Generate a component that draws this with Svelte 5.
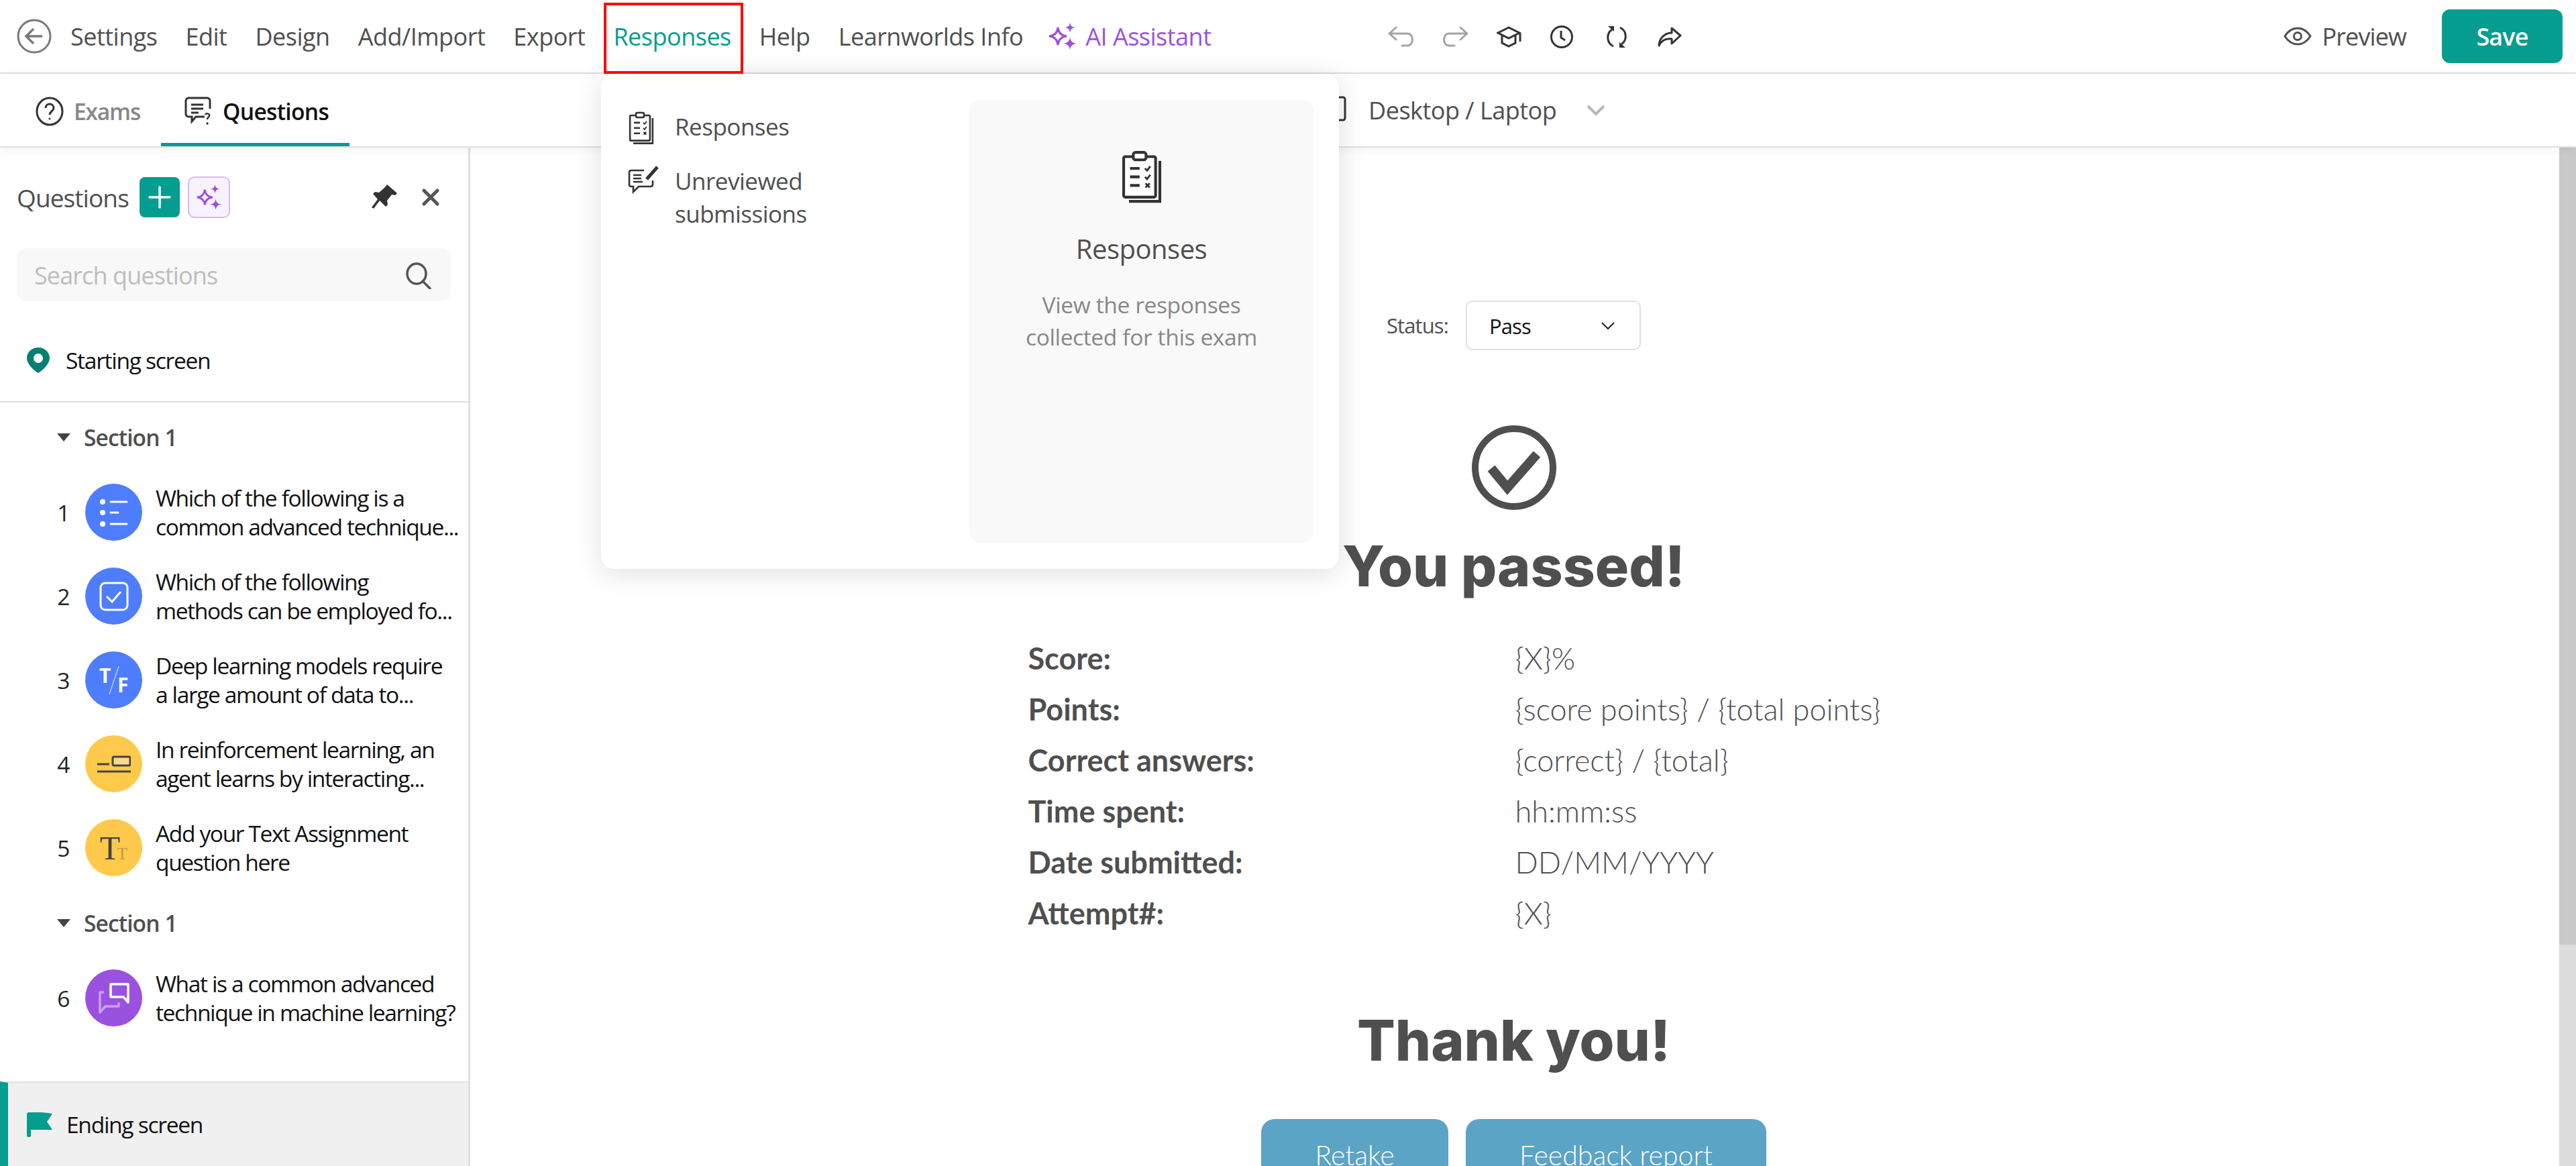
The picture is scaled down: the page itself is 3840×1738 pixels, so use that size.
<script>
    const navItems = ['Settings', 'Edit', 'Design', 'Add/Import', 'Export', 'Responses', 'Help', 'Learnworlds Info'];

    function star(cx, cy, r) {
        const k = r * 0.22;
        return `M${cx} ${cy - r}Q${cx + k * 0.4} ${cy - k * 0.4} ${cx + r} ${cy}Q${cx + k * 0.4} ${cy + k * 0.4} ${cx} ${cy + r}Q${cx - k * 0.4} ${cy + k * 0.4} ${cx - r} ${cy}Q${cx - k * 0.4} ${cy - k * 0.4} ${cx} ${cy - r}Z`;
    }

    const sections = [
        {
            title: 'Section 1',
            questions: [
                { n: 1, kind: 'list', color: '#4f7dff', lines: ['Which of the following is a', 'common advanced technique...'] },
                { n: 2, kind: 'check', color: '#4f7dff', lines: ['Which of the following', 'methods can be employed fo...'] },
                { n: 3, kind: 'tf', color: '#4f7dff', lines: ['Deep learning models require', 'a large amount of data to...'] },
                { n: 4, kind: 'gap', color: '#ffca4b', lines: ['In reinforcement learning, an', 'agent learns by interacting...'] },
                { n: 5, kind: 'text', color: '#ffca4b', lines: ['Add your Text Assignment', 'question here'] },
            ],
        },
        {
            title: 'Section 1',
            questions: [
                { n: 6, kind: 'chat', color: '#9b51e0', lines: ['What is a common advanced', 'technique in machine learning?'] },
            ],
        },
    ];

    const results = [
        ['Score:', '{X}%'],
        ['Points:', '{score points} / {total points}'],
        ['Correct answers:', '{correct} / {total}'],
        ['Time spent:', 'hh:mm:ss'],
        ['Date submitted:', 'DD/MM/YYYY'],
        ['Attempt#:', '{X}'],
    ];
</script>

{#snippet clipboard(size)}
    <svg class="clip" width={size} height={size * 1.24} viewBox="0 0 40 50" fill="none" stroke="#333" stroke-width="2.6">
        <path d="M37 10v38H8" stroke-width="2.6" />
        <rect x="3" y="6" width="30" height="38" rx="1.5" fill="#fff" />
        <rect x="12" y="2" width="12" height="7" rx="2" fill="#fff" />
        <path d="M9 17h9M9 25h9M9 33h9" />
        <path d="M23 17l2 2 3-4M23 25l2 2 3-4M23.500 31l4 4M27.500 31l-4 4" stroke-width="1.800" />
    </svg>
{/snippet}

<div class="app">
    <header class="topbar">
        <svg class="back" width="52" height="52" viewBox="0 0 52 52" fill="none" stroke="#7a7a7a" stroke-width="3">
            <circle cx="26" cy="26" r="24" />
            <path d="M38 26H15M25 15L14 26l11 11" stroke-width="3.500" />
        </svg>
        <nav class="nav">
            {#each navItems as item}
                <span class="nav-item" class:active={item === 'Responses'}>{item}</span>
            {/each}
            <span class="nav-item ai">
                <svg width="42" height="42" viewBox="0 0 42 42" fill="#9b51e0">
                    <path d={star(14, 21, 13)} fill="none" stroke="#9b51e0" stroke-width="3" />
                    <path d={star(32, 8, 7.500)} />
                    <path d={star(32, 32, 9.500)} />
                </svg>
                AI Assistant
            </span>
        </nav>

        <div class="tools">
            <svg width="40" height="32" viewBox="0 0 40 32" fill="none" stroke="#a3a3a3" stroke-width="3" stroke-linecap="round" stroke-linejoin="round">
                <path d="M12 2L2 11l10 9M2 11h27c10 0 10 18 0 18h-8" />
            </svg>
            <svg class="t-redo" width="40" height="32" viewBox="0 0 40 32" fill="none" stroke="#a3a3a3" stroke-width="3" stroke-linecap="round" stroke-linejoin="round">
                <path d="M28 2l10 9-10 9M38 11H11c-10 0-10 18 0 18h8" />
            </svg>
            <svg class="t-grad" width="38" height="32" viewBox="0 0 38 32" fill="none" stroke="#333" stroke-width="3">
                <path d="M18 2L2 10l16 8 16-8zM8 13v12l10 5 10-5V13M35 11v12" />
            </svg>
            <svg class="t-clock" width="36" height="36" viewBox="0 0 36 36" fill="none" stroke="#333" stroke-width="3">
                <circle cx="18" cy="18" r="15.500" />
                <path d="M17 9v10l6 4" />
            </svg>
            <svg class="t-sync" width="34" height="34" viewBox="0 0 34 34" fill="none" stroke="#333" stroke-width="3">
                <path d="M10 6A14.500 14.500 0 0 0 12 31M24 28A14.500 14.500 0 0 0 22 3" />
                <path d="M4 1h9v8zM30 33h-9v-8z" fill="#333" stroke="none" />
            </svg>
            <svg class="t-share" width="36" height="30" viewBox="0 0 36 30" fill="none" stroke="#333" stroke-width="3" stroke-linejoin="round">
                <path d="M21 2l13 11-13 12v-7C12 17 6 20 2 28c0-10 8-19 19-19z" />
            </svg>
        </div>

        <div class="actions">
            <span class="preview">
                <svg width="42" height="30" viewBox="0 0 42 30" fill="none" stroke="#505050" stroke-width="3">
                    <path d="M2 15C12 -1 30 -1 40 15C30 31 12 31 2 15Z" />
                    <circle cx="21" cy="15" r="5.500" />
                </svg>
                Preview
            </span>
            <button class="save">Save</button>
        </div>
    </header>

    <div class="subbar">
        <div class="tabs">
            <div class="tab">
                <svg width="42" height="44" viewBox="0 0 42 44" fill="none" stroke="#333" stroke-width="3">
                    <ellipse cx="21" cy="22" rx="19" ry="20" />
                    <path d="M15 17c0-8 12-8 12 0 0 5-6 5-6 10" />
                    <circle cx="21" cy="33" r="1.500" fill="#333" stroke="none" />
                </svg>
                <span>Exams</span>
            </div>
            <div class="tab current">
                <svg width="42" height="44" viewBox="0 0 42 44" fill="none" stroke="#333" stroke-width="3">
                    <path d="M30 30H17l-6 7v-7H6c-2 0-4-2-4-4V6c0-2 2-4 4-4h28c2 0 4 2 4 4v12" />
                    <path d="M10 12h18M10 18h18M10 24h11" />
                    <path d="M31 27c1-3 7-2 6 2-1 2-3 2-3 5" stroke-width="2.500" />
                    <circle cx="34" cy="40" r="1.800" fill="#333" stroke="none" />
                </svg>
                <span>Questions</span>
            </div>
        </div>
        <div class="device">
            <svg width="34" height="42" viewBox="0 0 34 42" fill="none" stroke="#333" stroke-width="3">
                <rect x="2" y="2" width="30" height="34" rx="3" />
            </svg>
            <span>Desktop / Laptop</span>
            <svg class="device-chevron" width="28" height="17" viewBox="0 0 28 17" fill="none" stroke="#b5b5b5" stroke-width="4">
                <path d="M2 2l12 12L26 2" />
            </svg>
        </div>
    </div>

    <div class="body">
        <aside class="sidebar">
            <div class="side-head">
                <span class="side-title">Questions</span>
                <span class="add">
                    <svg width="34" height="34" viewBox="0 0 34 34" stroke="#fff" stroke-width="3.500" stroke-linecap="round">
                        <path d="M17 2v30M2 17h30" />
                    </svg>
                </span>
                <span class="ai-btn">
                    <svg width="40" height="40" viewBox="0 0 42 42" fill="#9b51e0">
                        <path d={star(14, 21, 12)} fill="none" stroke="#9b51e0" stroke-width="3" />
                        <path d={star(30, 8, 7)} />
                        <path d={star(31, 32, 8.500)} />
                    </svg>
                </span>
                <svg class="pin" width="38" height="38" viewBox="0 0 38 38" fill="#333">
                    <path d="M23 0l15 13-3 3-5-1-7 9 1 6-3 3-9-9-9 12-3-2 9-12-7-8 3-3 6 1 9-8z" />
                </svg>
                <svg class="close" width="26" height="26" viewBox="0 0 26 26" stroke="#555" stroke-width="5" stroke-linecap="round">
                    <path d="M3 3l20 20M23 3L3 23" />
                </svg>
            </div>

            <div class="search">
                <span>Search questions</span>
                <svg width="40" height="40" viewBox="0 0 40 40" fill="none" stroke="#555" stroke-width="3.500">
                    <ellipse cx="17" cy="17" rx="14" ry="15" />
                    <path d="M26 28l11 11" stroke-linecap="round" />
                </svg>
            </div>

            <div class="start">
                <svg width="34" height="38" viewBox="0 0 34 38" fill="#077e74">
                    <path fill-rule="evenodd" d="M17 0c10 0 17 7 17 16 0 8-10 18-17 22C10 34 0 24 0 16 0 7 7 0 17 0zm0 9a7 7 0 100 14 7 7 0 000-14z" />
                </svg>
                <span>Starting screen</span>
            </div>

            <div class="list">
                {#each sections as section}
                    <div class="section-row">
                        <svg width="20" height="12" viewBox="0 0 20 12" fill="#444"><path d="M0 0h20L10 12z" /></svg>
                        <span>{section.title}</span>
                    </div>
                    {#each section.questions as q}
                        <div class="question">
                            <span class="num">{q.n}</span>
                            <span class="badge" style="background: {q.color}">
                                {#if q.kind === 'list'}
                                    <svg width="48" height="48" viewBox="0 0 48 48" fill="#fff" stroke="#fff" stroke-linecap="round">
                                        <circle cx="7" cy="8" r="4" stroke="none" />
                                        <circle cx="7" cy="24" r="4" stroke="none" />
                                        <circle cx="7" cy="41" r="4" stroke="none" />
                                        <path d="M19 8h24M19 24h11M19 41h24" stroke-width="3" />
                                    </svg>
                                {:else if q.kind === 'check'}
                                    <svg width="44" height="44" viewBox="0 0 44 44" fill="none" stroke="#fff" stroke-width="3">
                                        <rect x="2" y="2" width="40" height="40" rx="7" />
                                        <path d="M11 22l8 8 13-15" />
                                    </svg>
                                {:else if q.kind === 'tf'}
                                    <span class="tf">
                                        <span class="tf-t">T</span>
                                        <svg width="16" height="42" viewBox="0 0 16 42" stroke="#fff" stroke-opacity="0.6" stroke-width="1.500"><path d="M15 0L1 42" /></svg>
                                        <span class="tf-f">F</span>
                                    </span>
                                {:else if q.kind === 'gap'}
                                    <svg width="50" height="26" viewBox="0 0 50 26" fill="none" stroke="#444" stroke-width="3">
                                        <path d="M0 13h18M0 24h50" />
                                        <rect x="23" y="2" width="26" height="13" rx="2" fill="#f8d988" />
                                    </svg>
                                {:else if q.kind === 'text'}
                                    <span class="tt">T<small>T</small></span>
                                {:else}
                                    <svg width="46" height="46" viewBox="0 0 46 46" fill="none" stroke-width="3.500" stroke-linejoin="round">
                                        <path d="M8 14H2v30l8-9h20v-6" stroke="#c9a0f0" />
                                        <path d="M18 2h26v27l-7-8H18z" stroke="#fff" />
                                    </svg>
                                {/if}
                            </span>
                            <span class="q-text">
                                {#each q.lines as line}<span class="q-line">{line}</span>{/each}
                            </span>
                        </div>
                    {/each}
                {/each}
            </div>

            <div class="ending">
                <svg width="38" height="38" viewBox="0 0 38 38" fill="#049d8f">
                    <path d="M0 4c0-2 1-3 3-3h15c4 0 6 0 20 2l-8 12 8 12H6v9c0 1-1 2-3 2s-3-1-3-2z" />
                </svg>
                <span>Ending screen</span>
            </div>
        </aside>

        <main class="canvas">
            <div class="status">
                <span class="status-label">Status:</span>
                <div class="select">
                    <span>Pass</span>
                    <svg width="20" height="12" viewBox="0 0 20 12" fill="none" stroke="#222" stroke-width="2"><path d="M1 1l9 9 9-9" /></svg>
                </div>
            </div>

            <svg class="check" width="128" height="126" viewBox="0 0 128 126" fill="none" stroke="#4f4f4f" stroke-width="10">
                <ellipse cx="64" cy="63" rx="58" ry="58" />
                <path d="M30 64l24 29 44-50" stroke-width="14" />
            </svg>

            <h1 class="heading">You passed!</h1>

            <dl class="results">
                {#each results as [label, value]}
                    <dt>{label}</dt>
                    <dd>{value}</dd>
                {/each}
            </dl>

            <h2 class="heading thanks">Thank you!</h2>

            <div class="buttons">
                <button class="outcome retake">Retake</button>
                <button class="outcome feedback">Feedback report</button>
            </div>
        </main>

        <div class="scrollbar"><div class="thumb"></div></div>
    </div>

    <!-- menu de Responses, ouvert -->
    <div class="dropdown">
        <div class="menu-col">
            <div class="menu-item">
                <span class="menu-icon">{@render clipboard(40)}</span>
                <span>Responses</span>
            </div>
            <div class="menu-item">
                <span class="menu-icon">
                    <svg width="46" height="42" viewBox="0 0 46 42" fill="none" stroke="#333" stroke-width="2.600">
                        <path d="M24 7H5C3 7 2 8 2 10v18c0 2 1 3 3 3h3v8l8-8h18c2 0 3-1 3-3v-6" />
                        <path d="M8 14h12M8 19h12M8 24h14" />
                        <path d="M28 20L44 2" stroke-width="5" />
                    </svg>
                </span>
                <span class="menu-label">Unreviewed submissions</span>
            </div>
        </div>
        <div class="menu-card">
            {@render clipboard(64)}
            <div class="card-title">Responses</div>
            <div class="card-text">View the responses collected for this exam</div>
        </div>
    </div>

    <div class="annotation"></div>
</div>

<style>
    :global(body) {
        margin: 0;
    }
    .app {
        position: relative;
        display: flex;
        flex-direction: column;
        height: 1738px;
        overflow: hidden;
        background: #fff;
        color: #4f4f4f;
        font-family: "Open Sans", "Noto Sans", sans-serif;
        font-size: 36px;
        letter-spacing: -0.5px;
    }
    svg {
        flex: none;
        display: block;
    }

    .topbar {
        display: flex;
        align-items: center;
        height: 108px;
        border-bottom: 2px solid #e0e0e0;
        flex: none;
    }
    .back {
        margin-left: 25px;
    }
    .nav {
        display: flex;
        align-items: center;
        gap: 42px;
        margin-left: 28px;
    }
    .nav-item {
        display: flex;
        align-items: center;
        white-space: nowrap;
    }
    .nav-item.active {
        color: #049d8f;
    }
    .nav-item.ai {
        color: #9b51e0;
        gap: 13px;
        margin-left: -4px;
    }
    .tools {
        display: flex;
        align-items: center;
        position: absolute;
        left: 2069px;
        top: 37px;
        height: 36px;
    }
    .t-redo {
        margin-left: 40px;
    }
    .t-grad {
        margin-left: 42px;
    }
    .t-clock {
        margin-left: 41px;
    }
    .t-sync {
        margin-left: 47px;
    }
    .t-share {
        margin-left: 44px;
    }
    .actions {
        display: flex;
        align-items: center;
        margin-left: auto;
        margin-right: 20px;
    }
    .preview {
        display: flex;
        align-items: center;
        gap: 16px;
        letter-spacing: -0.9px;
    }
    .save {
        width: 180px;
        height: 80px;
        margin-left: 53px;
        border: 0;
        border-radius: 12px;
        background: #049d8f;
        color: #fff;
        font: inherit;
        font-weight: 600;
        letter-spacing: -0.9px;
    }

    .subbar {
        position: relative;
        z-index: 2;
        display: flex;
        align-items: stretch;
        height: 108px;
        flex: none;
        border-bottom: 2px solid #e0e0e0;
        box-shadow: 0 3px 14px rgba(0, 0, 0, 0.06);
        background: #fff;
    }
    .tabs {
        display: flex;
        padding-left: 18px;
    }
    .tab {
        display: flex;
        align-items: center;
        gap: 15px;
        padding: 3px 31px 0 35px;
        font-weight: 600;
        color: #888;
        font-size: 33.600px;
        letter-spacing: -1.2px;
    }
    .tab.current {
        color: #111;
        border-bottom: 5px solid #049d8f;
        padding-top: 8px;
        letter-spacing: -0.7px;
    }
    .device {
        display: flex;
        align-items: center;
        gap: 33px;
        margin-left: 1452px;
    }
    .device-chevron {
        margin-left: 12px;
    }

    .body {
        display: flex;
        flex: 1;
        min-height: 0;
    }
    .sidebar {
        display: flex;
        flex-direction: column;
        width: 698px;
        flex: none;
        border-right: 3px solid #e0e0e0;
    }
    .side-head {
        display: flex;
        align-items: center;
        height: 60px;
        margin-top: 44px;
        padding-left: 25px;
    }
    .side-title {
        font-size: 37px;
        font-weight: 500;
        width: 183px;
        letter-spacing: -0.9px;
    }
    .add {
        display: flex;
        align-items: center;
        justify-content: center;
        width: 60px;
        height: 60px;
        border-radius: 8px;
        background: #049d8f;
    }
    .ai-btn {
        display: flex;
        align-items: center;
        justify-content: center;
        width: 63px;
        height: 62px;
        margin-left: 12px;
        border: 2px solid #d9b8f5;
        border-radius: 10px;
        background: #f7f2ff;
        box-sizing: border-box;
    }
    .pin {
        margin-left: 211px;
    }
    .close {
        margin-left: 37px;
    }
    .search {
        display: flex;
        align-items: center;
        justify-content: space-between;
        height: 79px;
        margin: 46px 26px 0 25px;
        padding: 2px 28px 0 26px;
        box-sizing: border-box;
        border-radius: 14px;
        background: #f8f8f8;
        color: #bdbdbd;
        letter-spacing: -0.9px;
    }
    .start {
        display: flex;
        align-items: center;
        gap: 24px;
        height: 151px;
        padding: 27px 0 0 40px;
        box-sizing: border-box;
        border-bottom: 2px solid #e0e0e0;
        color: #111;
        font-size: 33.600px;
        letter-spacing: -1.3px;
    }
    .list {
        flex: 1;
        min-height: 0;
        padding-top: 22px;
    }
    .section-row {
        display: flex;
        align-items: center;
        gap: 20px;
        height: 60px;
        margin-bottom: 39px;
        padding-left: 85px;
        font-size: 33.600px;
        font-weight: 600;
        letter-spacing: -0.9px;
    }
    .question {
        display: flex;
        align-items: center;
        height: 85px;
        margin-bottom: 40px;
    }
    .num {
        width: 127px;
        padding-right: 23px;
        box-sizing: border-box;
        text-align: right;
        color: #222;
        font-size: 33.600px;
    }
    .badge {
        display: flex;
        align-items: center;
        justify-content: center;
        width: 85px;
        height: 85px;
        flex: none;
        border-radius: 50%;
    }
    .q-text {
        margin-left: 20px;
        color: #111;
        font-size: 33.600px;
        line-height: 43px;
        letter-spacing: -1.4px;
    }
    .q-line {
        display: block;
        white-space: nowrap;
    }
    .tf {
        display: flex;
        align-items: center;
        color: #fff;
        font-size: 30px;
        font-weight: 700;
        line-height: 1;
    }
    .tf-t {
        margin-top: -14px;
        margin-right: -3px;
    }
    .tf-f {
        margin-top: 14px;
        margin-left: -3px;
    }
    .tt {
        color: #444;
        font-family: "Liberation Serif", serif;
        font-size: 50px;
        line-height: 1;
        letter-spacing: 0;
    }
    .tt small {
        color: #c49a3c;
        font-size: 26px;
        margin-left: -5px;
    }
    .ending {
        display: flex;
        align-items: center;
        gap: 21px;
        height: 124px;
        padding-left: 28px;
        flex: none;
        border-top: 2px solid #e0e0e0;
        border-left: 12px solid #049d8f;
        background: #f0f0f0;
        color: #111;
        font-size: 33.600px;
        letter-spacing: -1.3px;
    }

    .canvas {
        flex: 1;
        min-width: 0;
        display: flex;
        flex-direction: column;
        align-items: center;
        padding: 228px 3px 0 0;
    }
    .status {
        display: flex;
        align-items: center;
        gap: 26px;
        font-size: 31px;
        letter-spacing: -0.9px;
    }
    .select {
        display: flex;
        align-items: center;
        justify-content: space-between;
        width: 261px;
        height: 74px;
        padding: 2px 37px 0 33px;
        box-sizing: border-box;
        border: 2px solid #e0e0e0;
        border-radius: 10px;
        color: #111;
    }
    .check {
        margin-top: 112px;
    }
    .heading {
        margin: 42px 0 0;
        font-family: Inter, "Open Sans", sans-serif;
        font-size: 84px;
        font-weight: 800;
        line-height: 84px;
        letter-spacing: 0;
        color: #4f4f4f;
    }
    .results {
        display: grid;
        grid-template-columns: 726px 722px;
        grid-auto-rows: 76px;
        align-items: center;
        margin: 57px 0 0;
        font-family: Lato, sans-serif;
        font-size: 45px;
        letter-spacing: 0;
    }
    .results dt {
        font-weight: 700;
    }
    .results dd {
        margin: 0;
        font-weight: 300;
    }
    .thanks {
        margin-top: 110px;
    }
    .buttons {
        display: flex;
        gap: 26px;
        margin-top: 75px;
    }
    .outcome {
        height: 106px;
        border: 0;
        border-radius: 20px;
        background: #5ba4c5;
        color: #fff;
        font-family: Lato, sans-serif;
        font-size: 41px;
        font-weight: 300;
    }
    .retake {
        width: 279px;
    }
    .feedback {
        width: 448px;
    }
    .scrollbar {
        width: 25px;
        flex: none;
        background: #dcdcdc;
    }
    .thumb {
        height: 1188px;
        background: #c9c9c9;
    }

    .dropdown {
        position: absolute;
        z-index: 5;
        left: 896px;
        top: 110px;
        display: flex;
        justify-content: space-between;
        width: 1100px;
        height: 738px;
        padding: 39px 38px 39px 40px;
        box-sizing: border-box;
        border-radius: 20px;
        background: #fff;
        box-shadow: 0 6px 40px rgba(0, 0, 0, 0.13);
        font-size: 35px;
    }
    .menu-col {
        display: flex;
        flex-direction: column;
        gap: 29px;
        width: 330px;
        padding-top: 15px;
    }
    .menu-item {
        display: flex;
        gap: 25px;
        line-height: 49px;
    }
    .menu-icon {
        width: 45px;
        flex: none;
        padding-top: 2px;
    }
    .menu-label {
        width: 240px;
    }
    .menu-card {
        display: flex;
        flex-direction: column;
        align-items: center;
        width: 513px;
        padding-top: 75px;
        box-sizing: border-box;
        border-radius: 16px;
        background: #f9f9f9;
        text-align: center;
    }
    .card-title {
        margin-top: 40px;
        font-size: 40px;
    }
    .card-text {
        width: 400px;
        margin-top: 32px;
        color: #888;
        font-size: 33.600px;
        line-height: 48px;
        letter-spacing: -0.4px;
    }
    .annotation {
        position: absolute;
        z-index: 6;
        left: 900px;
        top: 4px;
        width: 208px;
        height: 106px;
        box-sizing: border-box;
        border: 4px solid #f00;
    }
</style>
